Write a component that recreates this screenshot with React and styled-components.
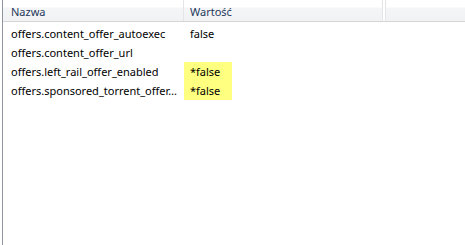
import React from "react";
import styled, { createGlobalStyle } from "styled-components";

const Global = createGlobalStyle`
  html, body { margin: 0; padding: 0; background: #fff; }
  body { font-family: "Noto Sans", "Open Sans", sans-serif; font-size: 11px; }
`;

const Window = styled.div`
  width: 465px;
  height: 245px;
  display: flex;
  padding-left: 2px;
  box-sizing: border-box;
  background: #fff;
  overflow: hidden;
`;

const ListView = styled.div`
  flex: 1;
  display: flex;
  flex-direction: column;
  border-left: 1px solid #8f959c;
`;

const Header = styled.div`
  display: flex;
  height: 21px;
  border-bottom: 1px solid #d5d5d5;
  background: linear-gradient(to bottom, #ffffff 0px, #ffffff 7px, #f4f5f7 8px, #f1f2f4 21px);
  margin-bottom: 2px;
`;

const HeaderCell = styled.div`
  width: ${(p) => p.$w}px;
  flex: ${(p) => (p.$grow ? 1 : "none")};
  padding-left: ${(p) => p.$pad}px;
  padding-top: 1px;
  box-sizing: border-box;
  display: flex;
  align-items: center;
  color: #1e395b;
  border-right: ${(p) => (p.$divider ? "1px solid #e3e5e8" : "none")};
  box-shadow: ${(p) => (p.$double ? "2px 0 0 #fff, 3px 0 0 #e3e5e8" : "none")};
  margin-right: ${(p) => (p.$double ? "2px" : "0")};
  white-space: nowrap;
`;

const Row = styled.div`
  display: flex;
  height: 19px;
  align-items: stretch;
`;

const NameCell = styled.div`
  width: 180px;
  padding-left: 8px;
  box-sizing: border-box;
  display: flex;
  align-items: center;
  color: #000;
  white-space: nowrap;
  overflow: hidden;
`;

const ValueCell = styled.div`
  width: 200px;
  padding-left: 1px;
  box-sizing: border-box;
  display: flex;
  align-items: stretch;
  color: #000;
  white-space: nowrap;
`;

const Value = styled.span`
  display: flex;
  align-items: center;
  box-sizing: border-box;
  min-width: 48px;
  padding: 0 6px;
  background: ${(p) => (p.$changed ? "#ffff80" : "transparent")};
`;

const rows = [
  { name: "offers.content_offer_autoexec", value: "false" },
  { name: "offers.content_offer_url", value: "" },
  { name: "offers.left_rail_offer_enabled", value: "*false", changed: true },
  { name: "offers.sponsored_torrent_offer…", value: "*false", changed: true },
];

export default function App() {
  return (
    <>
      <Global />
      <Window>
        <ListView>
          <Header>
            <HeaderCell $w={181} $pad={8} $divider>
              Nazwa
            </HeaderCell>
            <HeaderCell $w={199} $pad={6} $divider $double>
              Wartość
            </HeaderCell>
            <HeaderCell $grow $pad={6} />
          </Header>
          {rows.map((r) => (
            <Row key={r.name}>
              <NameCell>{r.name}</NameCell>
              <ValueCell>
                {r.value ? <Value $changed={r.changed}>{r.value}</Value> : null}
              </ValueCell>
            </Row>
          ))}
        </ListView>
      </Window>
    </>
  );
}
